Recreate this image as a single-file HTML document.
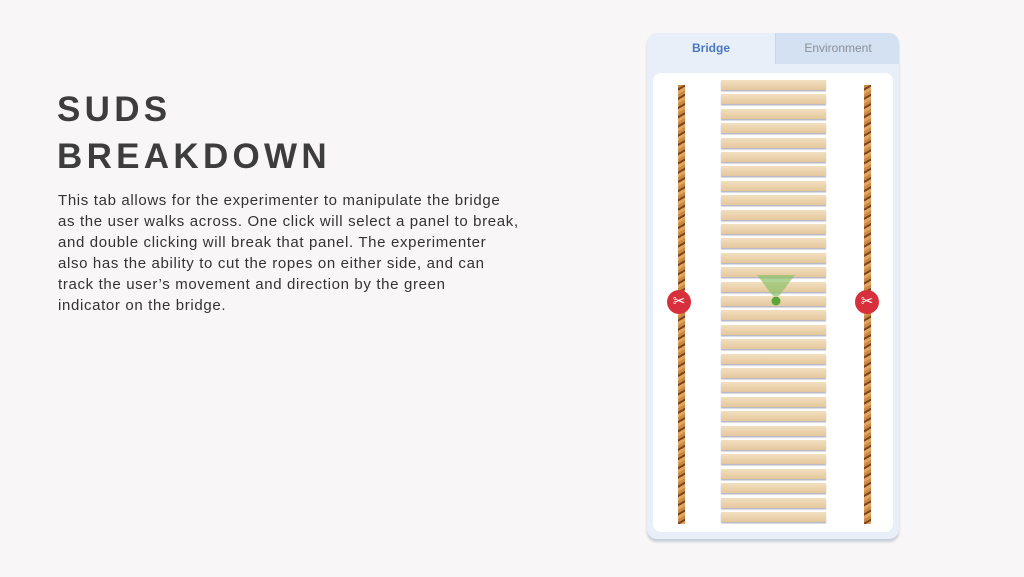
<html><head><style>
body{margin:0;width:1024px;height:577px;background:#f8f6f6;position:relative;overflow:hidden;font-family:"Liberation Sans",sans-serif}
h1{position:absolute;left:57px;top:86px;margin:0;font-size:35px;line-height:47px;letter-spacing:4.3px;color:#3d3d3d;font-weight:bold}
p{position:absolute;left:58px;top:190px;width:480px;margin:0;font-size:15px;line-height:21px;color:#333;letter-spacing:0.65px}
.panel{position:absolute;left:647px;top:33px;width:252px;height:506px;background:#e8eff8;border-radius:10px;box-shadow:0 3px 2px #c8ced8;overflow:hidden}
.t1{position:absolute;left:0;top:0;width:128px;height:31px;text-align:center;line-height:30px;font-size:12px;font-weight:bold;color:#4a77c0}
.t2{position:absolute;left:128px;top:0;width:124px;height:31px;background:#d3e1f2;text-align:center;line-height:30px;font-size:12px;color:#8a8f98;border-left:1px solid #c9d6e6}
.inner{position:absolute;left:6px;top:40px;width:240px;height:459px;background:#fff;border-radius:8px}
.rope{position:absolute;width:7px;top:52px;height:439px;background:repeating-linear-gradient(150deg,#c98a45 0 3px,#7a4520 3px 5px,#e0a561 5px 8px)}
.plank{position:absolute;left:74px;width:105px;height:10px;background:linear-gradient(180deg,#f2dfc0,#e4c89c);box-shadow:0 1.5px 1px #b8b8c4}
.sc{position:absolute;width:24px;height:24px;border-radius:50%;background:#d8303a;top:257px;color:#fff;font-size:15px;text-align:center;line-height:24px}
</style></head><body>
<h1>SUDS<br>BREAKDOWN</h1>
<p>This tab allows for the experimenter to manipulate the bridge<br>as the user walks across. One click will select a panel to break,<br>and double clicking will break that panel. The experimenter<br>also has the ability to cut the ropes on either side, and can<br>track the user’s movement and direction by the green<br>indicator on the bridge.</p>
<div class="panel">
<div class="t1">Bridge</div><div class="t2">Environment</div>
<div class="inner"></div>
<div class="rope" style="left:31px"></div>
<div class="rope" style="left:217px"></div>
<div id="pl"></div>
<svg style="position:absolute;left:108px;top:241px" width="42" height="32"><polygon points="2,1 40,1 24,22 18,22" fill="#8fc06a" opacity=".7"/><circle cx="21" cy="27" r="4.5" fill="#5aa63a"/></svg>
<div class="sc" style="left:20px">✂</div>
<div class="sc" style="left:208px">✂</div>
</div>
<script>
var h='';for(var i=0;i<31;i++){h+='<div class="plank" style="top:'+(47+i*14.4)+'px"></div>'}
document.getElementById('pl').outerHTML=h;
</script>
</body></html>
